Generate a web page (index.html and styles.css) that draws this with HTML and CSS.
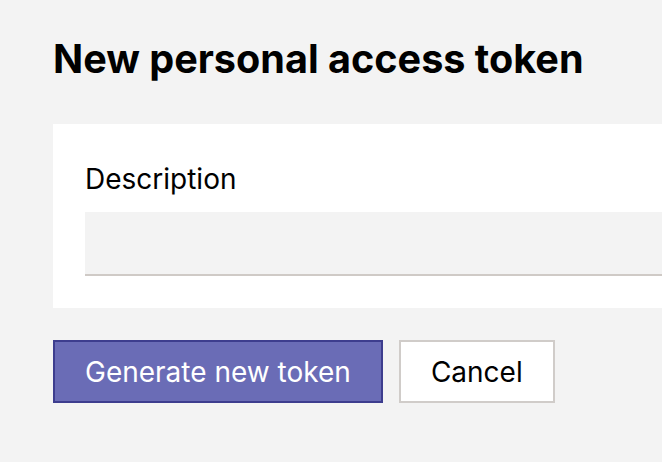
FILE: index.html
```html
<!DOCTYPE html>
<html lang="en">
<head>
<meta charset="utf-8">
<title>New personal access token</title>
<link rel="stylesheet" href="styles.css">
</head>
<body>
<main class="page">
  <h1 class="title">New personal access token</h1>
  <form class="card">
    <label class="label" for="desc">Description</label>
    <input class="input" id="desc" type="text">
  </form>
  <div class="actions">
    <button class="btn btn-primary" type="button">Generate new token</button>
    <button class="btn btn-secondary" type="button">Cancel</button>
  </div>
</main>
</body>
</html>
```
FILE: styles.css
```css
html, body {
  margin: 0;
  padding: 0;
  background: #f3f3f3;
  overflow: hidden;
}
body {
  font-family: Inter, "Liberation Sans", sans-serif;
  color: #000;
}
.page {
  padding: 35px 0 0 53px;
}
.title {
  margin: 0;
  font-size: 39.6px;
  line-height: 48px;
  font-weight: 700;
  letter-spacing: 0;
}
.card {
  margin-top: 41px;
  background: #fff;
  padding: 37px 0 32px 32px;
  display: flex;
  flex-direction: column;
}
.label {
  font-size: 28px;
  line-height: 36px;
  font-weight: 400;
}
.input {
  margin-top: 15px;
  height: 64px;
  box-sizing: border-box;
  border: none;
  border-bottom: 2px solid #cfcac6;
  background: #f3f3f3;
  font-family: inherit;
  font-size: 24px;
  padding: 0 16px;
  outline: none;
}
.actions {
  margin-top: 32px;
  display: flex;
  gap: 16px;
}
.btn {
  height: 63px;
  box-sizing: border-box;
  border: 2px solid;
  padding: 0 30px;
  font-family: inherit;
  font-size: 28px;
  font-weight: 400;
  display: flex;
  align-items: center;
  cursor: pointer;
}
.btn-primary {
  background: #6a6cb6;
  border-color: #3d3d8e;
  color: #fff;
}
.btn-secondary {
  background: #fff;
  border-color: #d0ccc9;
  color: #000;
}
```
